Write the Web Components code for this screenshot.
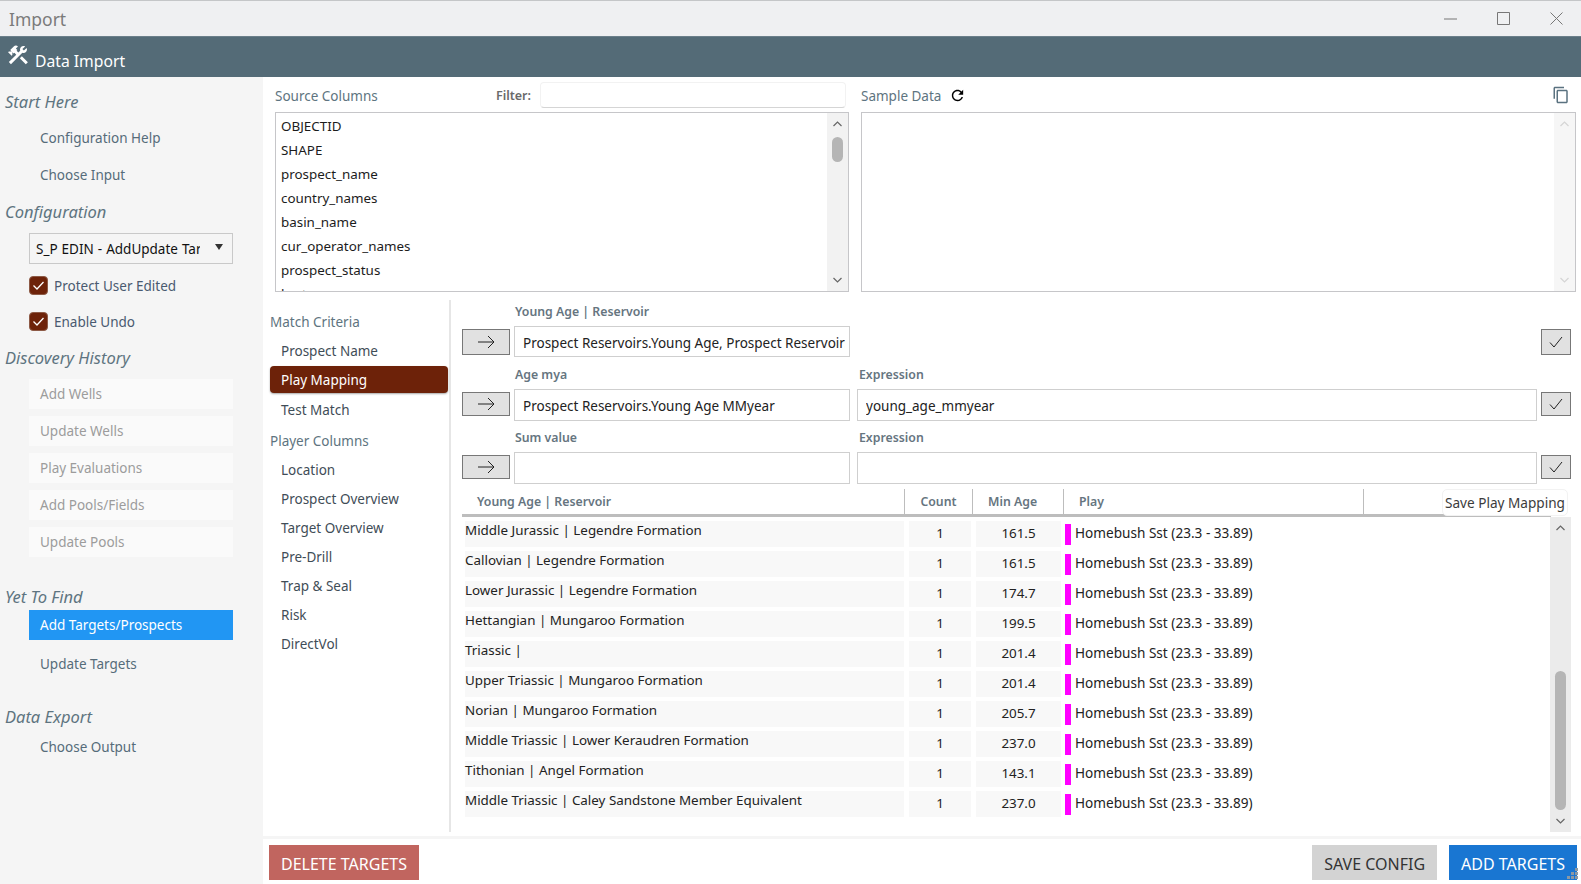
<!DOCTYPE html>
<html>
<head>
<meta charset="utf-8">
<title>Import</title>
<style>
  html, body { margin: 0; height: 100%; overflow: hidden; }
  body { font-family: "Noto Sans", "Open Sans", sans-serif; font-size: 14px; background: #fff; }
</style>
</head>
<body>
<import-app></import-app>
<script>
// small helper so each element only has to say what goes in its shadow root
class Base extends HTMLElement {
  connectedCallback() {
    if (!this.shadowRoot) this.attachShadow({ mode: 'open' });
    this.shadowRoot.innerHTML = this.html();
  }
}

class TitleBar extends Base {
  html() {
    return `
      <style>
        :host { display: flex; align-items: center; height: 35px; border-top: 1px solid #c4c6c8; background: #eff0f2; color: #7b7b7b; font-size: 17.5px; padding-left: 9px; }
        .t { flex: 1; }
        svg { display: block; width: 13px; height: 13px; margin-right: 40px; fill: none; stroke: #777; stroke-width: 1; }
        svg:last-child { margin-right: 18px; }
      </style>
      <div class="t">Import</div>
      <svg viewBox="0 0 13 13"><path d="M0 7h13"/></svg>
      <svg viewBox="0 0 13 13"><path d="M.5.5h12v12H.5z"/></svg>
      <svg viewBox="0 0 13 13"><path d="M.5.5l12 12M12.5.5l-12 12"/></svg>`;
  }
}

class AppHeader extends Base {
  html() {
    return `
      <style>
        :host { display: flex; align-items: flex-end; height: 41px; background: #546b77; color: #fff; font-size: 15.7px; padding-left: 6px; box-sizing: border-box; border-top: 1px solid #6b7f8a; }
        svg { width: 24px; height: 24px; fill: #fff; margin: 0 5px 10px 0; }
        span { line-height: 24px; margin-bottom: 4px; }
      </style>
      <svg viewBox="0 0 24 24"><path d="M13.78 15.3l6 6 2.11-2.16-6-6zM17.5 10c1.93 0 3.5-1.57 3.5-3.5 0-.58-.16-1.12-.41-1.6l-2.7 2.7-1.49-1.49 2.7-2.7c-.48-.25-1.02-.41-1.6-.41C15.57 3 14 4.57 14 6.5c0 .41.08.8.21 1.16l-1.85 1.85-1.78-1.78.71-.71-1.41-1.41L12 3.49c-1.17-1.17-3.07-1.17-4.24 0L4.22 7.03l1.41 1.41H2.81l-.71.71 3.54 3.54.71-.71V9.15l1.41 1.41.71-.71 1.78 1.78-7.41 7.41 2.12 2.12L16.34 9.79c.36.13.75.21 1.16.21z"/></svg>
      <span>Data Import</span>`;
  }
}

class NavHeading extends Base {
  html() {
    return `
      <style>
        :host { display: block; height: 24px; line-height: 24px; font-size: 16.5px; font-style: italic; color: #5e7480; padding-left: 5px; }
      </style>
      <slot></slot>`;
  }
}

class NavItem extends Base {
  html() {
    return `
      <style>
        :host { display: block; height: 30px; line-height: 30px; margin: 0 30px 7px 29px; padding-left: 11px; font-size: 13.5px; color: #566c7a; }
        :host([disabled]) { background: #fafafa; color: #9c9c9c; }
        :host([selected]) { background: #2196f3; color: #fff; }
      </style>
      <slot></slot>`;
  }
}

class NavSelect extends Base {
  html() {
    return `
      <style>
        :host { display: flex; align-items: center; box-sizing: border-box; height: 31px; margin: 0 30px 7px 29px; border: 1px solid #c9c9c9; padding: 0 9px 0 6px; font-size: 13.5px; color: #111; }
        .v { width: 164px; overflow: hidden; white-space: nowrap; word-spacing: .5px; }
        i { margin-left: auto; margin-bottom: 3px; width: 0; height: 0; border: 4.5px solid transparent; border-top: 6px solid #333; border-bottom: 0; }
      </style>
      <div class="v"><slot></slot></div><i></i>`;
  }
}

class NavCheck extends Base {
  html() {
    return `
      <style>
        :host { display: flex; align-items: center; height: 30px; margin: 0 30px 6px 29px; font-size: 13.5px; color: #4a5a70; }
        svg { width: 19px; height: 19px; margin: 0 6px 1px 0; }
      </style>
      <svg viewBox="0 0 19 19"><rect x=".5" y=".5" width="18" height="18" rx="3.5" fill="#6d2209" stroke="#8d5a46"/><path d="M4.5 9.5l3.5 3.5 6.5-7" fill="none" stroke="#fff" stroke-width="1.3"/></svg>
      <slot></slot>`;
  }
}

class SideNav extends Base {
  html() {
    return `
      <style>
        :host { display: flex; flex-direction: column; width: 263px; flex: none; background: #f5f5f5; padding-top: 13px; box-sizing: border-box; }
      </style>
      <nav-heading style="margin-bottom:9px">Start Here</nav-heading>
      <nav-item>Configuration Help</nav-item>
      <nav-item>Choose Input</nav-item>
      <nav-heading style="margin:3px 0 9px">Configuration</nav-heading>
      <nav-select>S_P EDIN - AddUpdate Targets</nav-select>
      <nav-check>Protect User Edited</nav-check>
      <nav-check>Enable Undo</nav-check>
      <nav-heading style="margin:3px 0 9px">Discovery History</nav-heading>
      <nav-item disabled>Add Wells</nav-item>
      <nav-item disabled>Update Wells</nav-item>
      <nav-item disabled>Play Evaluations</nav-item>
      <nav-item disabled>Add Pools/Fields</nav-item>
      <nav-item disabled>Update Pools</nav-item>
      <nav-heading style="margin:21px 0 1px">Yet To Find</nav-heading>
      <nav-item selected>Add Targets/Prospects</nav-item>
      <nav-item style="margin-top:2px">Update Targets</nav-item>
      <nav-heading style="margin:19px 0 3px">Data Export</nav-heading>
      <nav-item>Choose Output</nav-item>`;
  }
}

// vertical scrollbar: thumb position comes from attributes, no thumb when faint
class ScrollTrack extends Base {
  html() {
    const top = this.getAttribute('thumb-top');
    const h = this.getAttribute('thumb-height');
    const thumb = top ? `<b style="margin-top:${top}px;height:${h}px"></b>` : '';
    return `
      <style>
        :host { display: flex; flex-direction: column; align-items: center; flex: none; width: 21px; background: #ebebeb; --arrow: #666; --thumb: #b5b5b5; }
        :host([light]) { background: #f2f2f2; }
        :host([faint]) { background: #f6f6f6; --arrow: #d5d5d5; }
        svg { flex: none; width: 9px; height: 6px; margin: 8px 0; fill: none; stroke: var(--arrow); stroke-width: 1.2; }
        .track { flex: 1; display: flex; min-height: 0; width: 100%; justify-content: center; align-items: flex-start; }
        b { display: block; width: 11px; border-radius: 6px; background: var(--thumb); }
      </style>
      <svg viewBox="0 0 9 6"><path d="M.5 5l4-4 4 4"/></svg>
      <div class="track">${thumb}</div>
      <svg viewBox="0 0 9 6"><path d="M.5 1l4 4 4-4"/></svg>`;
  }
}

class ListBox extends Base {
  html() {
    const rows = ['OBJECTID', 'SHAPE', 'prospect_name', 'country_names', 'basin_name', 'cur_operator_names', 'prospect_status', 'hc_type'];
    return `
      <style>
        :host { display: flex; height: 180px; box-sizing: border-box; border: 1px solid #c6c6c9; overflow: hidden; }
        .rows { flex: 1; padding: 1px 0 0 5px; font-size: 13.4px; color: #1c1c1c; overflow: hidden; }
        .rows div { height: 24px; line-height: 24px; }
      </style>
      <div class="rows">${rows.map(r => `<div>${r}</div>`).join('')}</div>
      <scroll-track light thumb-top="2" thumb-height="25"></scroll-track>`;
  }
}

class SourcePanel extends Base {
  html() {
    return `
      <style>
        :host { display: block; }
        .head { display: flex; align-items: center; height: 26px; margin-bottom: 4px; font-size: 13.5px; color: #5e7480; }
        .head span:first-child { padding-top: 2px; }
        .f { margin-left: auto; font-size: 12.5px; font-weight: 600; color: #6a6a6a; margin-right: 9px; }
        .in { width: 306px; height: 26px; box-sizing: border-box; border-radius: 4px; border-bottom: 1px solid #d5d5d5; border-top: 1px solid #f2f2f2; border-left: 1px solid #f2f2f2; border-right: 1px solid #f2f2f2; margin-right: 3px; }
      </style>
      <div class="head"><span>Source Columns</span><span class="f">Filter:</span><div class="in"></div></div>
      <list-box></list-box>`;
  }
}

class SamplePanel extends Base {
  html() {
    return `
      <style>
        :host { display: block; }
        .head { display: flex; align-items: center; height: 26px; margin-bottom: 4px; font-size: 13.5px; color: #5e7480; }
        .head span { padding-top: 2px; }
        .refresh { width: 17px; height: 17px; margin-left: 8px; }
        .copy { width: 18px; height: 18px; margin-left: auto; margin-right: 6px; fill: #5a7280; }
        .box { display: flex; justify-content: flex-end; height: 180px; box-sizing: border-box; border: 1px solid #c6c6c9; }
      </style>
      <div class="head">
        <span>Sample Data</span>
        <svg class="refresh" viewBox="0 0 24 24"><path d="M17.65 6.35C16.2 4.9 14.21 4 12 4c-4.42 0-7.99 3.58-7.99 8s3.57 8 7.99 8c3.73 0 6.84-2.55 7.73-6h-2.08c-.82 2.33-3.04 4-5.65 4-3.31 0-6-2.69-6-6s2.69-6 6-6c1.66 0 3.14.69 4.22 1.78L13 11h7V4l-2.35 2.35z"/></svg>
        <svg class="copy" viewBox="0 0 24 24"><path d="M16 1H4c-1.1 0-2 .9-2 2v14h2V3h12V1zm3 4H8c-1.1 0-2 .9-2 2v14c0 1.1.9 2 2 2h11c1.1 0 2-.9 2-2V7c0-1.1-.9-2-2-2zm0 16H8V7h11v14z"/></svg>
      </div>
      <div class="box"><scroll-track faint></scroll-track></div>`;
  }
}

class CriteriaItem extends Base {
  html() {
    return `
      <style>
        :host { display: block; height: 29px; line-height: 29px; padding-left: 11px; font-size: 13.5px; color: #3f4d57; margin-right: 1px; }
        :host([heading]) { padding-left: 0; color: #5e7480; }
        :host([selected]) { height: 27px; line-height: 28px; margin-bottom: 3px; background: #6d2209; color: #fff; border-radius: 4px; box-shadow: 0 1px 2px rgba(0,0,0,.35); }
      </style>
      <slot></slot>`;
  }
}

class CriteriaNav extends Base {
  html() {
    return `
      <style>
        :host { display: block; width: 179px; flex: none; padding: 8px 0 0 7px; border-right: 2px solid #e6e6e6; margin-top: 3px; margin-bottom: 4px; }
      </style>
      <criteria-item heading>Match Criteria</criteria-item>
      <criteria-item>Prospect Name</criteria-item>
      <criteria-item selected>Play Mapping</criteria-item>
      <criteria-item>Test Match</criteria-item>
      <criteria-item heading style="margin-top:2px">Player Columns</criteria-item>
      <criteria-item>Location</criteria-item>
      <criteria-item>Prospect Overview</criteria-item>
      <criteria-item>Target Overview</criteria-item>
      <criteria-item>Pre-Drill</criteria-item>
      <criteria-item>Trap &amp; Seal</criteria-item>
      <criteria-item>Risk</criteria-item>
      <criteria-item>DirectVol</criteria-item>`;
  }
}

class MappingRow extends Base {
  html() {
    const label = this.getAttribute('label');
    const value = this.getAttribute('value') || '';
    const hasExpr = this.hasAttribute('expr-label');
    const h = Number(this.getAttribute('height') || 32);
    const bh = this.getAttribute('button-height') || 24;
    return `
      <style>
        :host { display: grid; grid-template-columns: 48px 336px 683px 30px; column-gap: 4px; row-gap: 5px; margin-bottom: 9px; }
        .l { height: 18px; line-height: 18px; font-size: 12.3px; font-weight: 600; color: #66757f; white-space: nowrap; padding-left: 1px; }
        .in { box-sizing: border-box; height: ${h}px; line-height: ${h + 1}px; border: 1px solid #cfcfcf; padding: 0 4px 0 8px; font-size: 13.5px; color: #222; }
        .in div { height: 100%; white-space: nowrap; overflow: hidden; }
        .btn { box-sizing: border-box; height: ${bh}px; margin-top: 3px; background: #e1e1e1; border: 1px solid #777; display: flex; align-items: center; justify-content: center; }
        svg { width: 18px; height: 14px; fill: none; stroke: #222; stroke-width: 1; }
        .expr { margin-left: 3px; }
        .l.expr { padding-left: 2px; }
      </style>
      <div></div>
      <div class="l">${label}</div>
      <div class="l expr">${hasExpr ? this.getAttribute('expr-label') : ''}</div>
      <div></div>
      <div class="btn"><svg viewBox="0 0 18 14"><path d="M1 7h16M11 1l6 6-6 6"/></svg></div>
      <div class="in"><div>${value}</div></div>
      ${hasExpr ? `<div class="in expr"><div>${this.getAttribute('expr-value') || ''}</div></div>` : '<div></div>'}
      <div class="btn"><svg viewBox="0 0 18 14"><path d="M3 7.5l4 4.5 8-10"/></svg></div>`;
  }
}

class MappingTable extends Base {
  html() {
    const rows = [
      ['Middle Jurassic | Legendre Formation', '161.5'],
      ['Callovian | Legendre Formation', '161.5'],
      ['Lower Jurassic | Legendre Formation', '174.7'],
      ['Hettangian | Mungaroo Formation', '199.5'],
      ['Triassic |', '201.4'],
      ['Upper Triassic | Mungaroo Formation', '201.4'],
      ['Norian | Mungaroo Formation', '205.7'],
      ['Middle Triassic | Lower Keraudren Formation', '237.0'],
      ['Tithonian | Angel Formation', '143.1'],
      ['Middle Triassic | Caley Sandstone Member Equivalent', '237.0']
    ];
    return `
      <style>
        :host { display: flex; flex-direction: column; flex: 1; min-height: 0; margin-top: -4px; position: relative; }
        .head { display: grid; grid-template-columns: 443px 68px 91px 300px; height: 25px; width: 1089px; border-bottom: 3px solid #bdbdbd; font-size: 12.3px; font-weight: 600; color: #66757f; }
        .head div { line-height: 25px; border-right: 1px solid #bdbdbd; }
        .head div:nth-child(1) { padding-left: 15px; }
        .head div:nth-child(2) { text-align: center; }
        .head div:nth-child(3) { padding-left: 15px; }
        .head div:nth-child(4) { padding-left: 15px; }
        .body { flex: 1; display: flex; min-height: 0; }
        .rows { flex: 1; padding: 4px 0 0 3px; }
        .row { display: grid; grid-template-columns: 439px 62px 85px 1fr; column-gap: 5px; height: 25px; margin-bottom: 5px; font-size: 13.4px; color: #222; }
        .row > div { background: #f8f8f8; line-height: 24px; }
        .row .n { line-height: 18px; }
        .row .c { text-align: center; }
        .row .p { background: none; display: flex; align-items: center; margin-left: -1px; font-size: 13.6px; }
        .row .p i { width: 6px; height: 21px; margin-right: 4px; background: #ff00ff; }
        .row .p span { margin-bottom: 2px; }
        .save { position: absolute; top: 0; right: 3px; box-sizing: border-box; width: 126px; height: 27px; background: #fff; border: 1px solid #f2f2f2; border-radius: 5px; text-align: center; line-height: 26px; font-size: 13.6px; color: #3c3c3c; white-space: nowrap; }
      </style>
      <div class="head"><div>Young Age | Reservoir</div><div>Count</div><div>Min Age</div><div>Play</div></div>
      <div class="save">Save Play Mapping</div>
      <div class="body">
        <div class="rows">${rows.map(r => `
          <div class="row"><div class="n">${r[0]}</div><div class="c">1</div><div class="c">${r[1]}</div><div class="p"><i></i><span>Homebush Sst (23.3 - 33.89)</span></div></div>`).join('')}
        </div>
        <scroll-track thumb-top="132" thumb-height="139"></scroll-track>
      </div>`;
  }
}

class AppButton extends Base {
  html() {
    return `
      <style>
        :host { display: block; height: 35px; line-height: 38px; padding: 0 12px; font-size: 16px; background: #d3d3d3; color: #333; white-space: nowrap; }
        :host([kind=danger]) { background: #c1655f; color: #fff; }
        :host([kind=primary]) { background: #1976d2; color: #fff; }
      </style>
      <slot></slot>`;
  }
}

class ActionBar extends Base {
  html() {
    return `
      <style>
        :host { display: flex; align-items: flex-start; gap: 12px; height: 48px; box-sizing: border-box; padding: 6px 4px 0 6px; border-top: 3px solid #f5f5f5; position: relative; }
        .grow { flex: 1; }
        svg { position: absolute; right: 3px; bottom: 4px; width: 12px; height: 12px; fill: #8b98a3; }
      </style>
      <app-button kind="danger">DELETE TARGETS</app-button>
      <div class="grow"></div>
      <app-button>SAVE CONFIG</app-button>
      <app-button kind="primary">ADD TARGETS</app-button>
      <svg viewBox="0 0 12 12"><path d="M9 0h3v3H9zM5 4h3v3H5zM9 4h3v3H9zM1 8h3v3H1zM5 8h3v3H5zM9 8h3v3H9z"/></svg>`;
  }
}

class ImportApp extends Base {
  html() {
    return `
      <style>
        :host { display: flex; flex-direction: column; height: 884px; width: 1581px; overflow: hidden; }
        .body { flex: 1; display: flex; min-height: 0; }
        main { flex: 1; display: flex; flex-direction: column; min-width: 0; }
        .top { display: grid; grid-template-columns: 574px 715px; column-gap: 12px; padding: 5px 0 0 12px; height: 215px; }
        .mid { flex: 1; display: flex; min-height: 0; }
        .content { flex: 1; display: flex; flex-direction: column; min-width: 0; padding: 6px 10px 4px 11px; }
      </style>
      <title-bar></title-bar>
      <app-header></app-header>
      <div class="body">
        <side-nav></side-nav>
        <main>
          <div class="top"><source-panel></source-panel><sample-panel></sample-panel></div>
          <div class="mid">
            <criteria-nav></criteria-nav>
            <div class="content">
              <mapping-row label="Young Age | Reservoir" value="Prospect Reservoirs.Young Age, Prospect Reservoirs.Reservoir" height="31" button-height="26"></mapping-row>
              <mapping-row style="margin-bottom:8px" label="Age mya" value="Prospect Reservoirs.Young Age MMyear" expr-label="Expression" expr-value="young_age_mmyear"></mapping-row>
              <mapping-row label="Sum value" expr-label="Expression"></mapping-row>
              <mapping-table></mapping-table>
            </div>
          </div>
          <action-bar></action-bar>
        </main>
      </div>`;
  }
}

customElements.define('title-bar', TitleBar);
customElements.define('app-header', AppHeader);
customElements.define('nav-heading', NavHeading);
customElements.define('nav-item', NavItem);
customElements.define('nav-select', NavSelect);
customElements.define('nav-check', NavCheck);
customElements.define('side-nav', SideNav);
customElements.define('scroll-track', ScrollTrack);
customElements.define('list-box', ListBox);
customElements.define('source-panel', SourcePanel);
customElements.define('sample-panel', SamplePanel);
customElements.define('criteria-item', CriteriaItem);
customElements.define('criteria-nav', CriteriaNav);
customElements.define('mapping-row', MappingRow);
customElements.define('mapping-table', MappingTable);
customElements.define('app-button', AppButton);
customElements.define('action-bar', ActionBar);
customElements.define('import-app', ImportApp);
</script>
</body>
</html>
